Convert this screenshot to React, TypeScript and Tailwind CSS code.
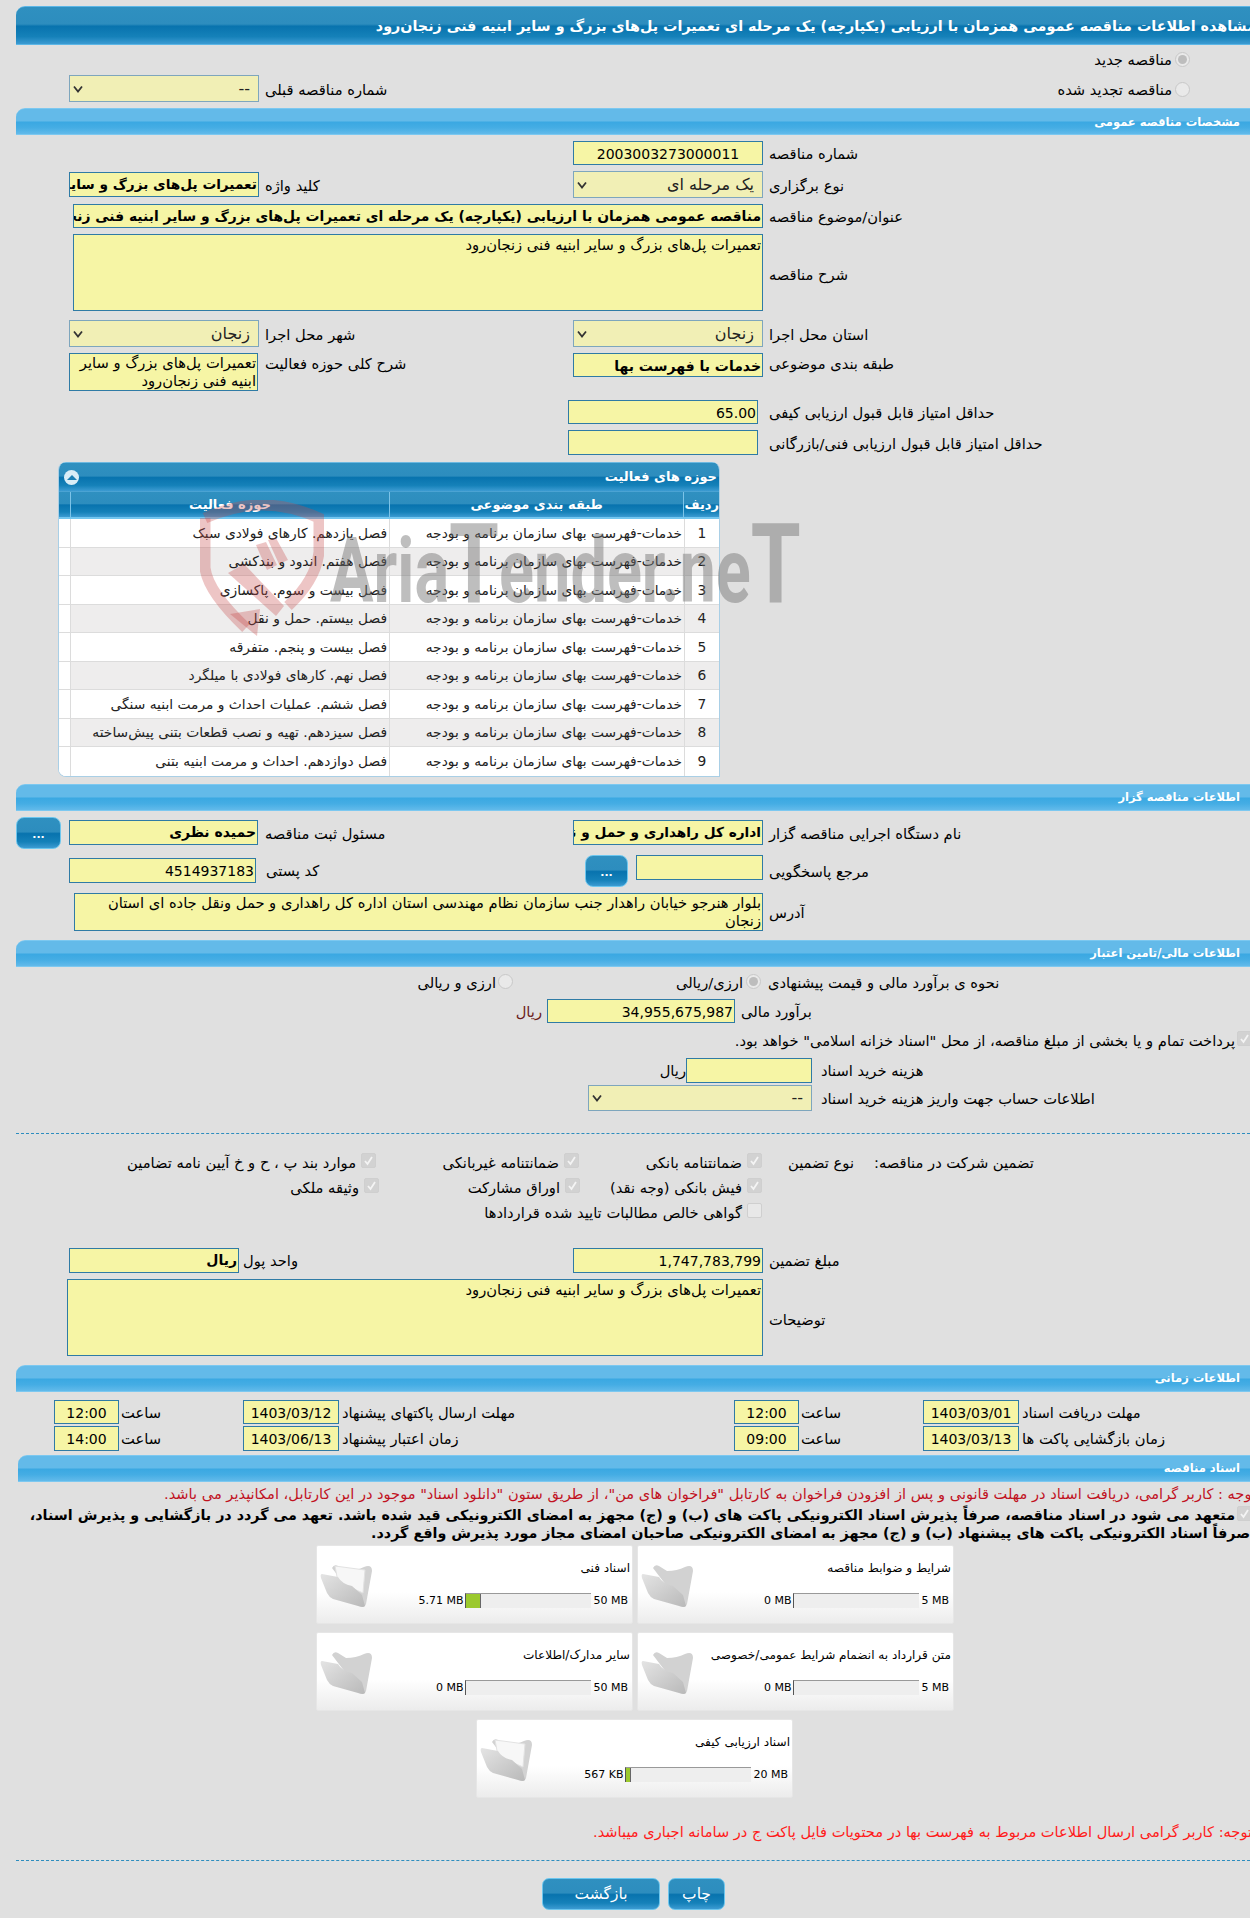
import React from 'react';

const leftCol = 'flex h-full w-[557px] shrink-0 items-center pl-[53px]';
const inputCls =
  'h-full overflow-hidden whitespace-nowrap border border-[#2f7ba5] bg-[#f6f5a5] px-px text-right text-black';
const selectCls =
  'flex h-full items-center justify-between border border-[#7ea6bd] bg-[#f1efb5] pl-[3px] pr-[8px] text-[16px] text-[#222]';

const darkBar =
  'bg-[linear-gradient(to_bottom,#2f90c0_0%,#2d8dbe_46%,#0873ae_52%,#1581b9_80%,#3c9bd2_100%)]';

const Field = ({ value, className, bold }: { value?: string; className: string; bold?: boolean }) => (
  <div dir="rtl" className={`${inputCls} ${className} ${bold ? 'font-bold' : ''}`}>
    {value}
  </div>
);

const Select = ({ value, className }: { value: string; className: string }) => (
  <div className={`${selectCls} ${className}`}>
    <svg width="10" height="8" viewBox="0 0 10 8">
      <path d="M1 1.5 5 6.5 9 1.5" fill="none" stroke="#333" strokeWidth="1.8" />
    </svg>
    <span dir="rtl">{value}</span>
  </div>
);

const Label = ({ children, className = '' }: { children: React.ReactNode; className?: string }) => (
  <span dir="rtl" className={`whitespace-nowrap pt-[2px] ${className}`}>
    {children}
  </span>
);

const Radio = ({ checked }: { checked?: boolean }) => (
  <span className="flex h-[15px] w-[15px] shrink-0 items-center justify-center rounded-full border border-[#c8c8c8] bg-[#e9e9e9]">
    {checked && <span className="h-[9px] w-[9px] rounded-full bg-[#bdbdbd]" />}
  </span>
);

const Check = ({ checked = true }: { checked?: boolean }) => (
  <span className={`flex h-[15px] w-[15px] shrink-0 items-center justify-center rounded-[2px] border border-[#cfcfcf] ${checked ? 'bg-[#d2d2d2]' : 'bg-[#e8e8e8]'}`}>
    {checked && (
      <svg width="11" height="11" viewBox="0 0 11 11">
        <path d="M2 6 4.5 9 9 2" fill="none" stroke="#f4f4f4" strokeWidth="1.8" />
      </svg>
    )}
  </span>
);

const SectionBar = ({ title, className = '' }: { title: string; className?: string }) => (
  <div
    dir="rtl"
    className={`flex h-[27px] items-center rounded-tl-[9px] border-y border-[#7cc8f0] bg-[linear-gradient(to_bottom,#63bae9_0%,#63bae9_48%,#3aa8e2_52%,#45ade4_75%,#62baea_100%)] pr-[10px] text-[11.5px] font-bold text-white ${className}`}
  >
    {title}
  </div>
);

const DotsButton = ({ className }: { className: string }) => (
  <div
    className={`flex items-end justify-center rounded-[8px] border border-[#6cc6ee] pb-[8px] text-[11px] leading-[10px] font-bold text-white ${darkBar} ${className}`}
  >
    ...
  </div>
);

const Folder = ({ open }: { open?: boolean }) => (
  <svg width="52" height="46" viewBox="0 0 52 46" className="mt-[2px] shrink-0">
    <defs>
      <linearGradient id="folderFront" x1="0" y1="0" x2="1" y2="1">
        <stop offset="0" stopColor="#e4e4e4" />
        <stop offset="1" stopColor="#b9b9b9" />
      </linearGradient>
    </defs>
    <path d="M12 6Q14 2 18 4L26 9Q36 9 44 5Q52 2 52 9L46 42Q45 46 41 44Z" fill="#d2d2d2" />
    {open && <path d="M15 4 45 8 43 31 18 20Z" fill="#f7f7f7" stroke="#e2e2e2" />}
    <path
      d="M2 12 18 15Q22 22 32 24L42 33 45 44Q43 46 38 44L13 37Q9 35 7 31L1 16Q0 12 2 12Z"
      fill="url(#folderFront)"
    />
  </svg>
);

const DocCard = ({
  title,
  used,
  max,
  fill,
  open,
  className = '',
}: {
  title: string;
  used: string;
  max: string;
  fill?: string;
  open?: boolean;
  className?: string;
}) => (
  <div
    className={`flex h-[79px] w-[317px] rounded-[2px] border border-[#e6e6e6] bg-[linear-gradient(to_bottom,#ffffff_0%,#ffffff_60%,#ececec_100%)] pl-[3px] pt-[14px] text-[11px] ${className}`}
  >
    <Folder open={open} />
    <div className="flex flex-1 flex-col items-end pr-[2px]">
      <div dir="rtl" className="h-[16px] text-[12.1px] leading-[16px] whitespace-nowrap">
        {title}
      </div>
      <div className="mr-[2px] mt-[17px] flex items-center">
        <span className="mr-[2px] whitespace-nowrap">{used}</span>
        <div className="h-[15px] w-[126px] border-t border-l border-t-[#999] border-l-[#555] bg-[#eeeeee]">
          {fill && <div className={`h-full border-r border-[#666] bg-[#9bc92d] ${fill}`} />}
        </div>
        <span className="ml-[2px] whitespace-nowrap">{max}</span>
      </div>
    </div>
  </div>
);

const activities = [
  'فصل یازدهم. کارهای فولادی سبک',
  'فصل هفتم. اندود و بندکشی',
  'فصل بیست و سوم. پاکسازی',
  'فصل بیستم. حمل و نقل',
  'فصل بیست و پنجم. متفرقه',
  'فصل نهم. کارهای فولادی با میلگرد',
  'فصل ششم.  عملیات احداث و مرمت ابنیه سنگی',
  'فصل سیزدهم. تهیه و نصب قطعات بتنی پیش‌ساخته',
  'فصل دوازدهم. احداث و مرمت ابنیه بتنی',
];

const ActivityTable = () => (
  <div className="relative ml-[42px] mt-[7px] w-[662px] overflow-hidden rounded-t-[8px] rounded-bl-[8px] border-x border-b border-[#a9cfe6] bg-white text-[13.8px]">
    <div className={`flex h-[29px] items-center justify-between border-t border-[#6db8e0] pl-[5px] pr-[2px] text-[13px] ${darkBar}`}>
      <span className="flex h-[15px] w-[15px] items-center justify-center rounded-full bg-[#d9edf7]">
        <span className="h-0 w-0 border-x-[5px] border-b-[5px] border-x-transparent border-b-[#1d80b5]" />
      </span>
      <span dir="rtl" className="font-bold text-white">
        حوزه های فعالیت
      </span>
    </div>
    <div className={`flex h-[28px] items-center border-t border-b-2 border-t-[#4ba3d3] border-b-[#73c6ef] text-[13px] font-bold text-white ${darkBar}`}>
      <div className="h-full w-[12px] border-r border-[#7cc3e8]" />
      <div dir="rtl" className="flex h-full w-[319px] items-center justify-center border-r border-[#7cc3e8]">
        حوزه فعالیت
      </div>
      <div dir="rtl" className="flex h-full w-[295px] items-center justify-center border-r border-[#7cc3e8]">
        طبقه بندی موضوعی
      </div>
      <div dir="rtl" className="flex h-full flex-1 items-center justify-center">
        ردیف
      </div>
    </div>
    {activities.map((name, i) => (
      <div
        key={name}
        className={`flex h-[28.5px] items-center border-b border-[#dcdcdc] text-[#222] last:border-b-0 ${
          i % 2 ? 'bg-[#eeeded]' : 'bg-white'
        }`}
      >
        <div className="h-full w-[12px] border-r border-[#dcdcdc] bg-white" />
        <div dir="rtl" className="flex h-full w-[319px] items-center border-r border-[#dcdcdc] pr-[2px] whitespace-nowrap">
          {name}
        </div>
        <div dir="rtl" className="flex h-full w-[295px] items-center border-r border-[#dcdcdc] pr-[2px] whitespace-nowrap">
          خدمات-فهرست بهای سازمان برنامه و بودجه
        </div>
        <div className="flex-1 text-center">{i + 1}</div>
      </div>
    ))}
  </div>
);

const Watermark = () => (
  <div className="pointer-events-none absolute left-[200px] top-[500px] flex items-end">
    <svg width="124" height="137" viewBox="0 0 124 137" className="shrink-0">
      <g fill="none" stroke="#c84a4a" strokeOpacity="0.32" strokeWidth="11">
        <path d="M5 18Q62 -8 119 18V52Q116 80 88 106" />
        <path d="M5 18V68Q8 92 46 128" />
      </g>
      <g fill="#c84a4a" fillOpacity="0.32">
        <path d="M30 114 57 136 60 109Z" />
        <path d="M28 73 44 64 84 106 76 116Z" />
        <path d="M56 45 66 42 77 65 67 70Z" />
        <path d="M68 40 76 38 88 60 79 64Z" />
      </g>
    </svg>
    <div className="ml-[6px] w-[470px] origin-left scale-x-[0.72] whitespace-nowrap font-['Roboto',sans-serif] font-bold leading-[80px] text-[#6e6e6e]/45">
      <span className="text-[90px]">Aria</span>
      <span className="text-[112px]">T</span>
      <span className="text-[90px]">ender.ne</span>
      <span className="text-[112px]">T</span>
    </div>
  </div>
);

export default function App() {
  return (
    <div className="relative h-[1918px] w-[1250px] overflow-hidden bg-[#e0e0e0] pl-[16px] pt-[6px] font-['DejaVu_Sans',sans-serif] text-[14.7px] leading-[16px] text-black">
      {/* title */}
      <div className={`flex h-[39px] items-center justify-end rounded-tl-[9px] border-y border-[#5cb6e6] ${darkBar}`}>
        <div dir="rtl" className="-mr-[6px] whitespace-nowrap text-[14.3px] font-bold text-white">
          مشاهده اطلاعات مناقصه عمومی همزمان با ارزیابی (یکپارچه) یک مرحله ای تعمیرات پل‌های بزرگ و سایر ابنیه فنی زنجان‌رود
        </div>
      </div>

      {/* renewal */}
      <div className="flex h-[63px] justify-between">
        <div className="ml-[53px] mt-[30px] flex h-[27px] items-center">
          <Select value="--" className="w-[190px]" />
          <Label className="ml-[6px]">شماره مناقصه قبلی</Label>
        </div>
        <div className="mr-[60px] mt-[5px] flex flex-col items-end gap-[12px]">
          <div className="flex items-center gap-[3px]">
            <Label>مناقصه جدید</Label>
            <Radio checked />
          </div>
          <div className="flex items-center gap-[3px]">
            <Label>مناقصه تجدید شده</Label>
            <Radio />
          </div>
        </div>
      </div>

      <SectionBar title="مشخصات مناقصه عمومی" />

      <div className="mt-[6px] flex h-[24px] items-center">
        <div className="w-[557px]" />
        <Field value="2003003273000011" className="w-[190px] !text-center text-[14px] leading-[24px]" />
        <Label className="ml-[6px]">شماره مناقصه</Label>
      </div>

      <div className="mt-[6px] flex h-[27px] items-center">
        <div className={leftCol}>
          <Field value="تعمیرات پل‌های بزرگ و سایر ابنیه فنی زنجان‌رود" bold className="!h-[25px] w-[190px] text-[13.7px] leading-[23px]" />
          <Label className="ml-[6px]">کلید واژه</Label>
        </div>
        <Select value="یک مرحله ای" className="w-[190px]" />
        <Label className="ml-[6px]">نوع برگزاری</Label>
      </div>

      <div className="mt-[6px] flex h-[24px] items-center pl-[57px]">
        <Field
          value="مناقصه عمومی همزمان با ارزیابی (یکپارچه) یک مرحله ای تعمیرات پل‌های بزرگ و سایر ابنیه فنی زنجان‌رود"
          bold
          className="w-[690px] text-[13.9px] leading-[22px]"
        />
        <Label className="ml-[6px]">عنوان/موضوع مناقصه</Label>
      </div>

      <div className="mt-[6px] flex h-[77px] items-center pl-[57px]">
        <Field value="تعمیرات پل‌های بزرگ و سایر ابنیه فنی زنجان‌رود" className="w-[690px] leading-[20px]" />
        <Label className="ml-[6px] mt-[2px]">شرح مناقصه</Label>
      </div>

      <div className="mt-[9px] flex h-[27px] items-center">
        <div className={leftCol}>
          <Select value="زنجان" className="w-[190px]" />
          <Label className="ml-[6px]">شهر محل اجرا</Label>
        </div>
        <Select value="زنجان" className="w-[190px]" />
        <Label className="ml-[6px]">استان محل اجرا</Label>
      </div>

      <div className="mt-[6px] flex h-[38px] items-start">
        <div className="flex h-full w-[557px] shrink-0 items-start pl-[53px]">
          <Field
            value="تعمیرات پل‌های بزرگ و سایر ابنیه فنی زنجان‌رود"
            className="!h-[38px] w-[189px] !whitespace-normal text-[14.7px] leading-[18px]"
          />
          <Label className="ml-[7px] mt-[1px]">شرح کلی حوزه فعالیت</Label>
        </div>
        <Field value="خدمات با فهرست بها" bold className="!h-[24px] w-[190px] text-[14px] leading-[24px]" />
        <Label className="ml-[6px] mt-[1px]">طبقه بندی موضوعی</Label>
      </div>

      <div className="mt-[9px] flex h-[24px] items-center pl-[552px]">
        <Field value="65.00" className="w-[190px] text-[14px] leading-[24px]" />
        <Label className="ml-[11px]">حداقل امتیاز قابل قبول ارزیابی کیفی</Label>
      </div>
      <div className="mt-[6px] flex h-[25px] items-center pl-[552px]">
        <Field className="w-[190px]" />
        <Label className="ml-[11px]">حداقل امتیاز قابل قبول ارزیابی فنی/بازرگانی</Label>
      </div>

      <ActivityTable />

      <SectionBar title="اطلاعات مناقصه گزار" className="mt-[7px]" />

      <div className="mt-[6px] flex h-[32px] items-center">
        <div className="flex w-[557px] shrink-0 items-center">
          <DotsButton className="h-[32px] w-[45px]" />
          <Field value="حمیده نظری" bold className="ml-[8px] !h-[25px] w-[189px] text-[14px] leading-[23px]" />
          <Label className="ml-[7px]">مسئول ثبت مناقصه</Label>
        </div>
        <Field value="اداره کل راهداری و حمل و نقل جاده ای استان زنجان" bold className="!h-[25px] w-[190px] text-[13.7px] leading-[23px]" />
        <Label className="ml-[6px]">نام دستگاه اجرایی مناقصه گزار</Label>
      </div>

      <div className="mt-[6px] flex h-[32px] items-start">
        <div className="mt-[3px] flex w-[569px] shrink-0 items-center pl-[53px]">
          <Field value="4514937183" className="!h-[25px] w-[187px] text-[14px] leading-[24px]" />
          <Label className="ml-[10px]">کد پستی</Label>
        </div>
        <DotsButton className="h-[32px] w-[43px]" />
        <Field className="ml-[8px] !h-[25px] w-[127px]" />
        <Label className="ml-[6px] mt-[7px]">مرجع پاسخگویی</Label>
      </div>

      <div className="mt-[6px] flex h-[38px] items-center pl-[58px]">
        <Field
          value="بلوار هنرجو خیابان راهدار جنب سازمان نظام مهندسی استان اداره کل راهداری و حمل ونقل جاده ای استان زنجان"
          className="w-[689px] !whitespace-normal leading-[18px]"
        />
        <Label className="ml-[6px]">آدرس</Label>
      </div>

      <SectionBar title="اطلاعات مالی/تامین اعتبار" className="mt-[9px]" />

      <div className="flex h-[32px] items-center pl-[404px]">
        <Label className="mb-[2px] w-[76px] text-right">ارزی و ریالی</Label>
        <span className="ml-[2px] mb-[3px]"><Radio /></span>
        <Label className="mb-[2px] ml-[150px] w-[80px] text-right">ارزی/ریالی</Label>
        <span className="ml-[3px] mb-[3px]"><Radio checked /></span>
        <Label className="mb-[2px] ml-[7px]">نحوه ی برآورد مالی و قیمت پیشنهادی</Label>
      </div>

      <div className="flex h-[24px] items-center pl-[502px]">
        <Label className="w-[24px] text-right text-[#6b1c1c]">ریال</Label>
        <Field value="34,955,675,987" className="ml-[5px] w-[188px] text-[14px] leading-[24px]" />
        <Label className="ml-[6px]">برآورد مالی</Label>
      </div>

      <div className="mt-[8px] flex h-[15px] items-start justify-end">
        <Label className="mr-[2px]">
          پرداخت تمام و یا بخشی از مبلغ مناقصه، از محل "اسناد خزانه اسلامی" خواهد بود.
        </Label>
        <span className="-mr-[2px]"><Check /></span>
      </div>

      <div className="mt-[12px] flex h-[25px] items-center pl-[646px]">
        <Label className="w-[24px]">ریال</Label>
        <Field className="w-[126px]" />
        <Label className="ml-[9px]">هزینه خرید اسناد</Label>
      </div>

      <div className="mt-[2px] flex h-[26px] items-center pl-[572px]">
        <Select value="--" className="w-[224px]" />
        <Label className="ml-[9px]">اطلاعات حساب جهت واریز هزینه خرید اسناد</Label>
      </div>

      <div className="mt-[22px] border-t border-dashed border-[#2d8dbf]" />

      <div className="mt-[19px] flex h-[15px] items-start">
        <div className="flex w-[360px] shrink-0 justify-end gap-[5px]">
          <Label>موارد بند پ ، ح و خ آیین نامه تضامین</Label>
          <Check />
        </div>
        <div className="flex w-[203px] shrink-0 justify-end gap-[5px]">
          <Label>ضمانتنامه غیربانکی</Label>
          <Check />
        </div>
        <div className="flex w-[183px] shrink-0 justify-end gap-[5px]">
          <Label>ضمانتنامه بانکی</Label>
          <Check />
        </div>
        <Label className="ml-[26px]">نوع تضمین</Label>
        <Label className="ml-[20px]">تضمین شرکت در مناقصه:</Label>
      </div>

      <div className="mt-[10px] flex h-[15px] items-start">
        <div className="flex w-[363px] shrink-0 justify-end gap-[5px]">
          <Label>وثیقه ملکی</Label>
          <Check />
        </div>
        <div className="flex w-[201px] shrink-0 justify-end gap-[5px]">
          <Label>اوراق مشارکت</Label>
          <Check />
        </div>
        <div className="flex w-[182px] shrink-0 justify-end gap-[5px]">
          <Label>فیش بانکی (وجه نقد)</Label>
          <Check />
        </div>
      </div>

      <div className="mt-[10px] flex h-[15px] w-[746px] items-start justify-end gap-[5px]">
        <Label>گواهی خالص مطالبات تایید شده قراردادها</Label>
        <Check checked={false} />
      </div>

      <div className="mt-[30px] flex h-[25px] items-center">
        <div className={leftCol}>
          <Field value="ریال" bold className="w-[170px] text-[14px] leading-[23px]" />
          <Label className="ml-[4px]">واحد پول</Label>
        </div>
        <Field value="1,747,783,799" className="w-[190px] text-[14px] leading-[24px]" />
        <Label className="ml-[6px]">مبلغ تضمین</Label>
      </div>

      <div className="mt-[6px] flex h-[77px] items-center pl-[51px]">
        <Field value="تعمیرات پل‌های بزرگ و سایر ابنیه فنی زنجان‌رود" className="w-[696px] leading-[20px]" />
        <Label className="ml-[6px] mt-[4px]">توضیحات</Label>
      </div>

      <SectionBar title="اطلاعات زمانی" className="mt-[9px]" />

      <div className="mt-[8px] flex h-[24px] items-center pl-[38px]">
        <Field value="12:00" className="w-[65px] !text-center text-[14px] leading-[24px]" />
        <Label className="ml-[2px] w-[122px] text-left">ساعت</Label>
        <Field value="1403/03/12" className="w-[96px] !text-center text-[14px] leading-[24px]" />
        <Label className="ml-[3px] w-[392px] text-left">مهلت ارسال پاکتهای پیشنهاد</Label>
        <Field value="12:00" className="w-[65px] !text-center text-[14px] leading-[24px]" />
        <Label className="ml-[2px] w-[122px] text-left">ساعت</Label>
        <Field value="1403/03/01" className="w-[96px] !text-center text-[14px] leading-[24px]" />
        <Label className="ml-[3px]">مهلت دریافت اسناد</Label>
      </div>
      <div className="mt-[2px] flex h-[25px] items-center pl-[38px]">
        <Field value="14:00" className="w-[65px] !text-center text-[14px] leading-[24px]" />
        <Label className="ml-[2px] w-[122px] text-left">ساعت</Label>
        <Field value="1403/06/13" className="w-[96px] !text-center text-[14px] leading-[24px]" />
        <Label className="ml-[3px] w-[392px] text-left">زمان اعتبار پیشنهاد</Label>
        <Field value="09:00" className="w-[65px] !text-center text-[14px] leading-[24px]" />
        <Label className="ml-[2px] w-[122px] text-left">ساعت</Label>
        <Field value="1403/03/13" className="w-[96px] !text-center text-[14px] leading-[24px]" />
        <Label className="ml-[3px]">زمان بازگشایی پاکت ها</Label>
      </div>

      <SectionBar title="اسناد مناقصه" className="ml-[2px] mt-[4px]" />

      <div className="mt-[2px] flex h-[16px] justify-end">
        <Label className="-mr-[6px] text-[14.6px] text-[#c1121f]">
          توجه : کاربر گرامی، دریافت اسناد در مهلت قانونی و پس از افزودن فراخوان به کارتابل "فراخوان های من"، از طریق ستون "دانلود اسناد" موجود در این کارتابل، امکانپذیر می باشد.
        </Label>
      </div>
      <div className="mt-[6px] flex h-[16px] items-center justify-end text-[14.3px] font-bold">
        <Label>
          متعهد می شود در اسناد مناقصه، صرفاً پذیرش اسناد الکترونیکی پاکت های (ب) و (ج) مجهز به امضای الکترونیکی قید شده باشد. تعهد می گردد در بازگشایی و پذیرش اسناد،
        </Label>
        <span className="-mr-[2px] ml-[2px]"><Check /></span>
      </div>
      <div className="mt-[1px] flex h-[16px] justify-end text-[14.3px] font-bold">
        <Label>
          صرفاً اسناد الکترونیکی پاکت های پیشنهاد (ب) و (ج) مجهز به امضای الکترونیکی صاحبان امضای مجاز مورد پذیرش واقع گردد.
        </Label>
      </div>

      <div className="ml-[300px] mt-[6px] flex gap-[4px]">
        <DocCard title="اسناد فنی" used="5.71 MB" max="50 MB" fill="w-[15px]" open />
        <DocCard title="شرایط و ضوابط مناقصه" used="0 MB" max="5 MB" />
      </div>
      <div className="ml-[300px] mt-[8px] flex gap-[4px]">
        <DocCard title="سایر مدارک/اطلاعات" used="0 MB" max="50 MB" />
        <DocCard title="متن قرارداد به انضمام شرایط عمومی/خصوصی" used="0 MB" max="5 MB" />
      </div>
      <div className="ml-[460px] mt-[8px]">
        <DocCard title="اسناد ارزیابی کیفی" used="567 KB" max="20 MB" fill="w-[5px]" open />
      </div>

      <div className="mt-[24px] flex h-[16px] justify-end">
        <Label className="-mr-[2px] text-[14.6px] text-[#ff1a1a]">
          توجه: کاربر گرامی ارسال اطلاعات مربوط به فهرست بها در محتویات فایل پاکت ج در سامانه اجباری میباشد.
        </Label>
      </div>

      <div className="mt-[22px] border-t border-dashed border-[#2d8dbf]" />

      <div className="ml-[526px] mt-[17px] flex gap-[8px] text-[15.5px] text-white">
        <div dir="rtl" className={`flex h-[32px] w-[118px] items-center justify-center rounded-[7px] border border-[#6cc6ee] ${darkBar}`}>
          بازگشت
        </div>
        <div dir="rtl" className={`flex h-[32px] w-[57px] items-center justify-center rounded-[7px] border border-[#6cc6ee] ${darkBar}`}>
          چاپ
        </div>
      </div>

      <Watermark />
    </div>
  );
}
